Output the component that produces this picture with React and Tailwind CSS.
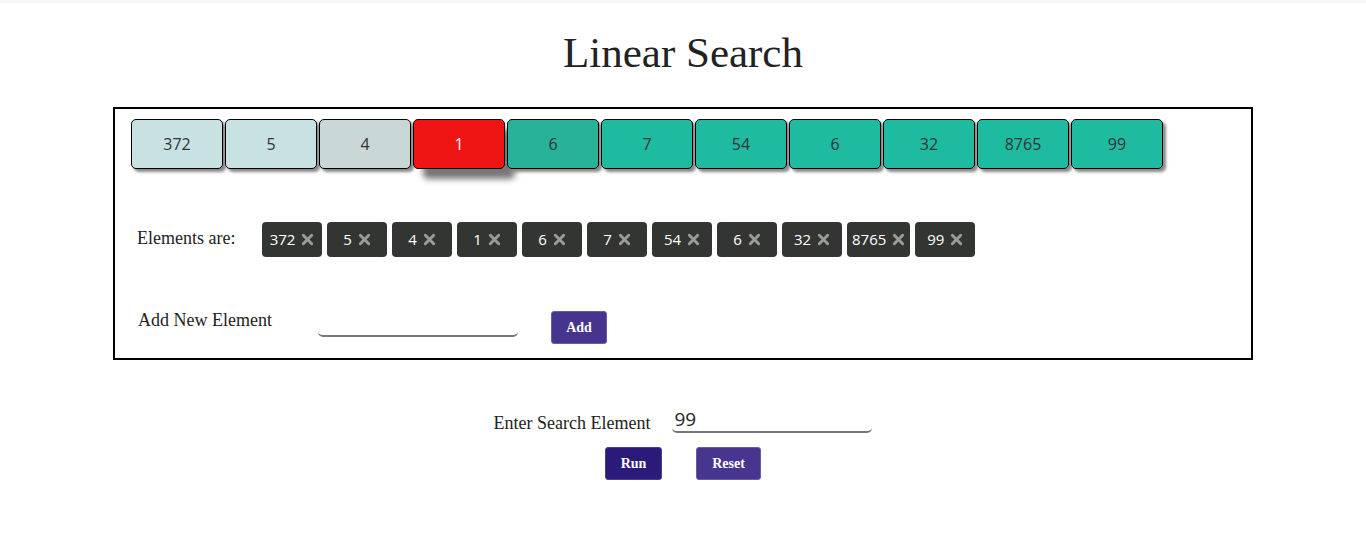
import { useState } from 'react';

const serif = { fontFamily: '"Liberation Serif", Georgia, serif' };
const sans = { fontFamily: '"Open Sans", "Noto Sans", sans-serif' };

const boxes = [
  { v: 372, bg: 'bg-[#c8e1e2]', text: 'text-[#333]', shadow: 'shadow-[3px_3px_3px_#888]' },
  { v: 5, bg: 'bg-[#c8e1e2]', text: 'text-[#333]', shadow: 'shadow-[3px_3px_3px_#888]' },
  { v: 4, bg: 'bg-[#cad7d7]', text: 'text-[#333]', shadow: 'shadow-[3px_3px_3px_#888]' },
  { v: 1, bg: 'bg-[#ef1515]', text: 'text-white', shadow: 'shadow-[10px_10px_6px_#777]' },
  { v: 6, bg: 'bg-[#28b299]', text: 'text-[#333]', shadow: 'shadow-[3px_3px_3px_#888]' },
  { v: 7, bg: 'bg-[#1fbba0]', text: 'text-[#333]', shadow: 'shadow-[3px_3px_3px_#888]' },
  { v: 54, bg: 'bg-[#1fbba0]', text: 'text-[#333]', shadow: 'shadow-[3px_3px_3px_#888]' },
  { v: 6, bg: 'bg-[#1fbba0]', text: 'text-[#333]', shadow: 'shadow-[3px_3px_3px_#888]' },
  { v: 32, bg: 'bg-[#1fbba0]', text: 'text-[#333]', shadow: 'shadow-[3px_3px_3px_#888]' },
  { v: 8765, bg: 'bg-[#1fbba0]', text: 'text-[#333]', shadow: 'shadow-[3px_3px_3px_#888]' },
  { v: 99, bg: 'bg-[#1fbba0]', text: 'text-[#333]', shadow: 'shadow-[3px_3px_3px_#888]' },
];

const XIcon = () => (
  <svg width="13" height="13" viewBox="0 0 14 14" className="ml-[6px]">
    <path d="M2.5 2.5 L11.5 11.5 M11.5 2.5 L2.5 11.5" stroke="#9b9b9b" strokeWidth="3.2" strokeLinecap="round" />
  </svg>
);

const App = () => {
  const [search, setSearch] = useState('99');
  const [newEl, setNewEl] = useState('');

  return (
    <div className="min-h-screen bg-white text-[#212529]">
      <div className="h-[3px] bg-[#f6f7f8]" />
      <h1 className="text-center text-[43px] leading-none pt-[28px] pb-[33px] text-[#222]" style={serif}>
        Linear Search
      </h1>

      <div className="w-[1140px] mx-auto border-2 border-black h-[253px] pl-[16px] pt-[10px]">
        <div className="flex gap-[2px]" style={sans}>
          {boxes.map((b, i) => (
            <div
              key={i}
              className={`w-[92px] h-[50px] flex items-center justify-center border border-black rounded-[5px] text-[16px] ${b.bg} ${b.text} ${b.shadow}`}
            >
              {b.v}
            </div>
          ))}
        </div>

        <div className="flex items-center mt-[53px] h-[35px]">
          <span className="w-[131px] pl-[6px] text-[18px] text-[#222] -mt-[3px]" style={serif}>Elements are:</span>
          <div className="flex gap-[5px]" style={sans}>
            {boxes.map((b, i) => (
              <div
                key={i}
                className="min-w-[60px] h-[35px] px-[5px] flex items-center justify-center bg-[#333533] rounded-[4px] text-white text-[15px]"
              >
                {b.v}
                <XIcon />
              </div>
            ))}
          </div>
        </div>

        <div className="flex items-start mt-[50px]">
          <span className="w-[187px] pl-[7px] text-[18px] text-[#222]" style={serif}>Add New Element</span>
          <input
            value={newEl}
            onChange={(e) => setNewEl(e.target.value)}
            className="w-[200px] h-[24px] mt-[6px] border-b-2 border-[#777] rounded-b-[5px] outline-none text-[18px]"
          />
          <button
            className="ml-[33px] mt-[4px] w-[56px] h-[33px] bg-[#47348f] border border-[#6a5aa8] rounded-[3px] text-white text-[14px] font-bold"
            style={serif}
          >
            Add
          </button>
        </div>
      </div>

      <div className="flex justify-center items-end mt-[47px]">
        <span className="text-[18px] leading-none text-[#222] mr-[22px] mb-[1px]" style={serif}>Enter Search Element</span>
        <input
          value={search}
          onChange={(e) => setSearch(e.target.value)}
          className="w-[200px] h-[26px] border-b-2 border-[#777] rounded-b-[5px] outline-none text-[19px] pl-[2px] leading-none"
          style={sans}
        />
      </div>
      <div className="flex justify-center gap-[34px] mt-[14px]">
        <button
          className="w-[57px] h-[33px] bg-[#2b1a7a] border border-[#4a3c90] rounded-[3px] text-white text-[14px] font-bold"
          style={serif}
        >
          Run
        </button>
        <button
          className="w-[65px] h-[33px] bg-[#47358f] border border-[#6a5aa8] rounded-[3px] text-white text-[14px] font-bold"
          style={serif}
        >
          Reset
        </button>
      </div>
    </div>
  );
};

export default App;
